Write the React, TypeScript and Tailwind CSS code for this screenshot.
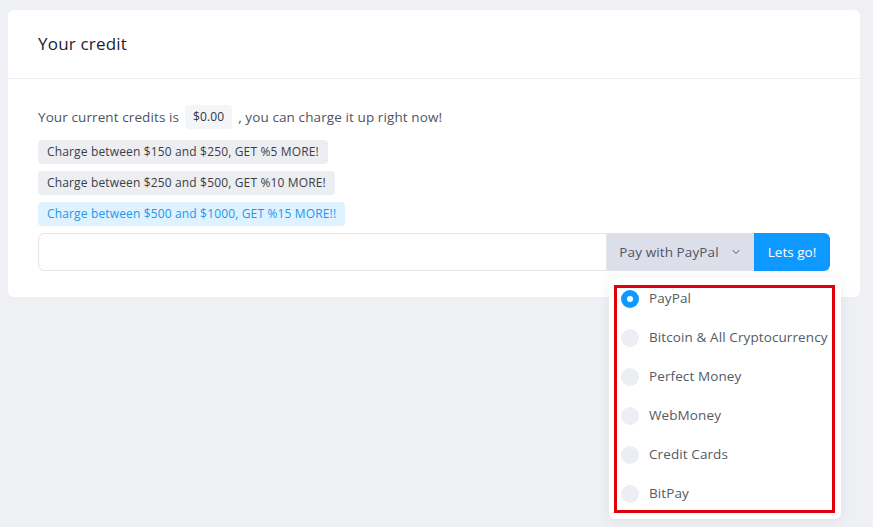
import React from "react";
import { ChevronDown } from "lucide-react";

const options = [
  "PayPal",
  "Bitcoin & All Cryptocurrency",
  "Perfect Money",
  "WebMoney",
  "Credit Cards",
  "BitPay",
];

export default function App() {
  return (
    <div
      className="min-h-screen bg-[#eef0f4] pl-[8px] pr-[13px] pt-[10px] pb-[10px] text-[#3f4350]"
      style={{ fontFamily: '"Open Sans", "Noto Sans", Arial, sans-serif' }}
    >
      <div className="w-[852px] rounded-md bg-white">
        <div className="flex h-[69px] items-center border-b border-[#eceef2] px-[30px]">
          <h1 className="text-[17px] font-medium tracking-[0.2px] text-[#1f2230]">Your credit</h1>
        </div>
        <div className="px-[30px] pt-[26px] pb-[26px]">
          <p className="flex items-center text-[13.5px] tracking-[0.1px] text-[#4f5462]">
            Your current credits is
            <span className="mx-[6px] rounded bg-[#f3f5f8] px-[8px] py-[3px] text-[12px] font-medium text-[#2f3340]">
              $0.00
            </span>
            , you can charge it up right now!
          </p>
          <div className="mt-[11px] flex flex-col items-start gap-[7px]">
            <span className="flex h-[24px] items-center rounded-[4px] bg-[#eceef2] px-[9px] text-[12px] tracking-[0.15px] text-[#3a3e4a]">
              Charge between $150 and $250, GET %5 MORE!
            </span>
            <span className="flex h-[24px] items-center rounded-[4px] bg-[#eceef2] px-[9px] text-[12px] tracking-[0.15px] text-[#3a3e4a]">
              Charge between $250 and $500, GET %10 MORE!
            </span>
            <span className="flex h-[24px] items-center rounded-[4px] bg-[#dff2ff] px-[9px] text-[12px] tracking-[0.15px] text-[#1c98f0]">
              Charge between $500 and $1000, GET %15 MORE!!
            </span>
          </div>
          <div className="mt-[7px] flex h-[38px]">
            <input className="min-w-0 flex-1 rounded-l-md border border-[#e3e5ea] outline-none" />
            <div className="relative">
              <button className="flex h-full w-[147px] items-center justify-center gap-[11px] bg-[#dcdfe9] text-[13.5px] tracking-[0.1px] text-[#505564]">
                Pay with PayPal
                <ChevronDown size={12} strokeWidth={2} />
              </button>
              <div className="absolute left-[2px] top-[44px] z-10 w-[232px] rounded-md bg-white pt-[2px] pb-[6px] shadow-[0_2px_12px_rgba(40,50,80,0.08)]">
                {options.map((o, i) => (
                  <div key={o} className="flex h-[39px] items-center gap-[10px] pl-[12px]">
                    {i === 0 ? (
                      <span className="flex h-[18px] w-[18px] items-center justify-center rounded-full bg-[#0d99ff]">
                        <span className="h-[6px] w-[6px] rounded-full bg-white" />
                      </span>
                    ) : (
                      <span className="h-[18px] w-[18px] rounded-full bg-[#eceef3]" />
                    )}
                    <span className="whitespace-nowrap text-[13.5px] tracking-[0.1px] text-[#555a66]">{o}</span>
                  </div>
                ))}
                <div className="pointer-events-none absolute left-[5px] top-[8px] h-[228px] w-[221px] border-[3px] border-[#e0000b]" />
              </div>
            </div>
            <button className="w-[76px] rounded-r-md bg-[#0d99ff] text-[13.5px] font-medium text-white">
              Lets go!
            </button>
          </div>
        </div>
      </div>
    </div>
  );
}
